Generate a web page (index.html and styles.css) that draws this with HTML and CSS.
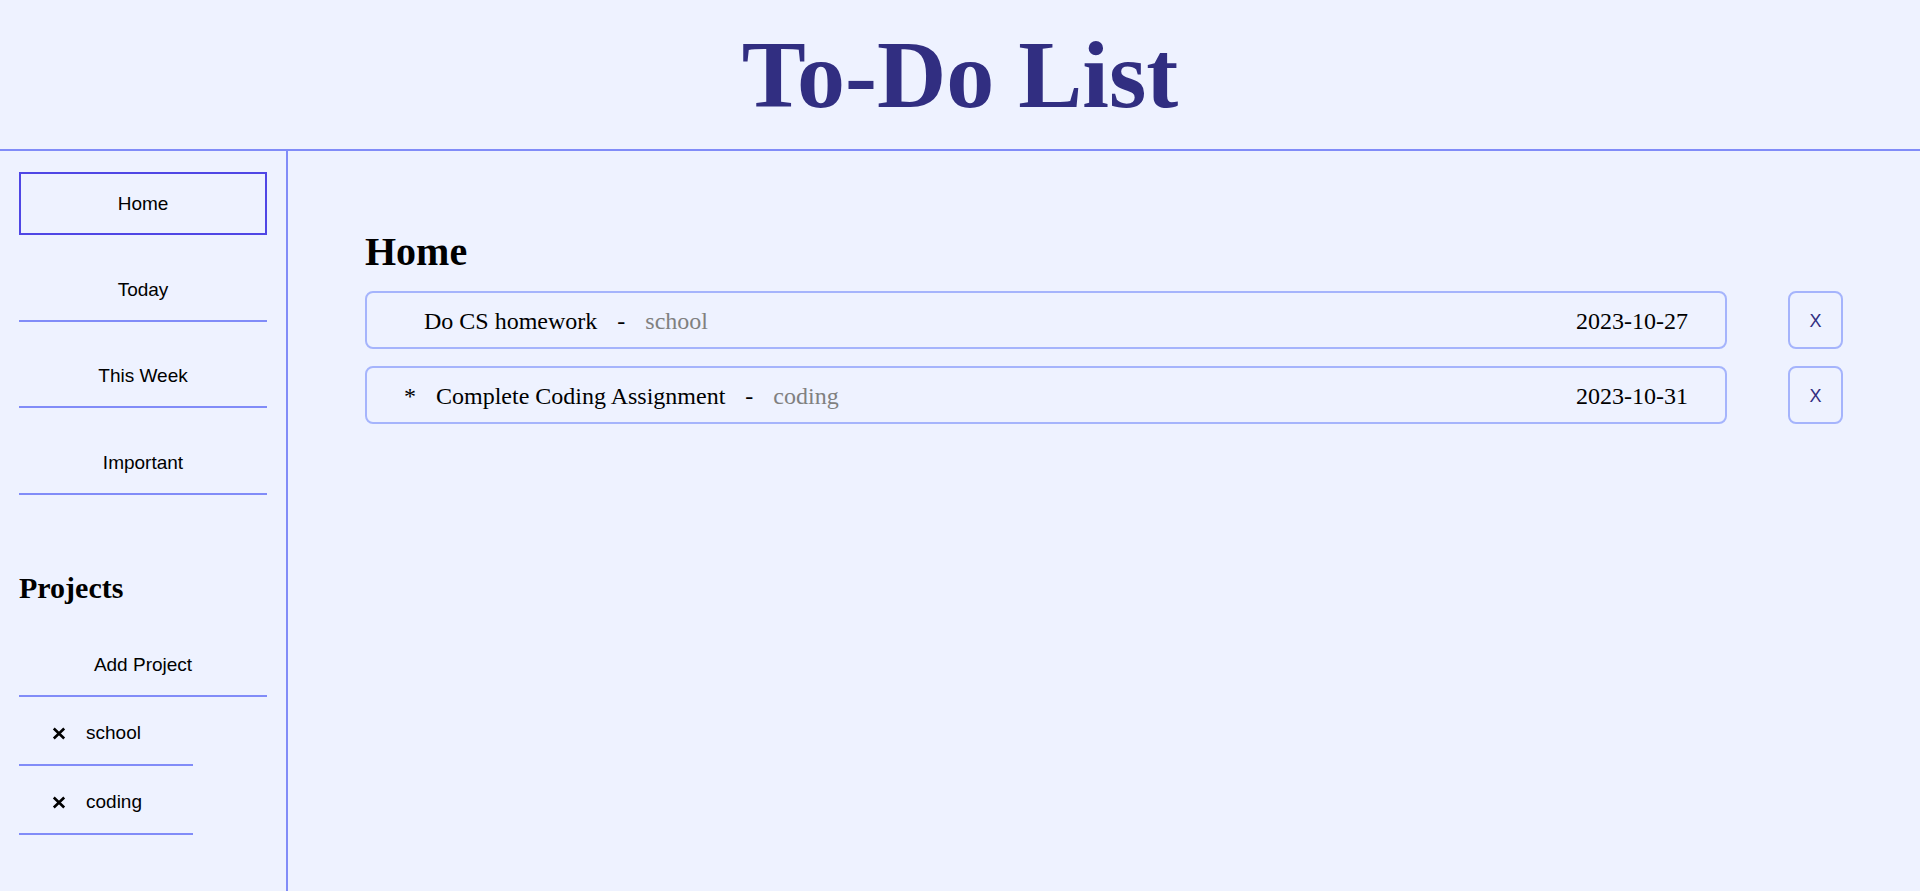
FILE: index.html
```html
<!DOCTYPE html>
<html lang="en">
<head>
<meta charset="utf-8">
<title>To-Do List</title>
<link rel="stylesheet" href="styles.css">
</head>
<body>
<header class="header">
  <h1 class="title">To-Do List</h1>
</header>
<div class="layout">
  <nav class="sidebar">
    <div class="menu">
      <button class="nav-item active">Home</button>
      <button class="nav-item">Today</button>
      <button class="nav-item">This Week</button>
      <button class="nav-item">Important</button>
    </div>
    <h2 class="projects-title">Projects</h2>
    <button class="nav-item">Add Project</button>
    <ul class="project-list">
      <li class="project-item">
        <svg class="remove-icon" viewBox="0 0 14 13" width="14" height="13" aria-hidden="true"><path d="M1.8 1.5 L12.2 11.5 M12.2 1.5 L1.8 11.5" stroke="#000" stroke-width="2.6" fill="none"/></svg>
        <span>school</span>
      </li>
      <li class="project-item">
        <svg class="remove-icon" viewBox="0 0 14 13" width="14" height="13" aria-hidden="true"><path d="M1.8 1.5 L12.2 11.5 M12.2 1.5 L1.8 11.5" stroke="#000" stroke-width="2.6" fill="none"/></svg>
        <span>coding</span>
      </li>
    </ul>
  </nav>
  <main class="main">
    <h1 class="page-title">Home</h1>
    <div class="task-list">
      <div class="task-row">
        <div class="task">
          <div class="task-left">
            <span class="star"></span>
            <span class="task-name">Do CS homework</span>
            <span class="dash">-</span>
            <span class="task-project">school</span>
          </div>
          <span class="task-date">2023-10-27</span>
        </div>
        <button class="delete">X</button>
      </div>
      <div class="task-row">
        <div class="task">
          <div class="task-left">
            <span class="star">*</span>
            <span class="task-name">Complete Coding Assignment</span>
            <span class="dash">-</span>
            <span class="task-project">coding</span>
          </div>
          <span class="task-date">2023-10-31</span>
        </div>
        <button class="delete">X</button>
      </div>
    </div>
  </main>
</div>
</body>
</html>
```
FILE: styles.css
```css
* {
  box-sizing: border-box;
}

html, body {
  margin: 0;
  padding: 0;
  height: 100%;
}

body {
  background: #eef2ff;
  font-family: "Liberation Serif", "Times New Roman", serif;
  color: #000;
  display: flex;
  flex-direction: column;
}

.header {
  height: 151px;
  border-bottom: 2px solid #818cf8;
  display: flex;
  align-items: center;
  justify-content: center;
  flex-shrink: 0;
}

.title {
  margin: 0;
  font-size: 96px;
  font-weight: bold;
  line-height: normal;
  color: #312e81;
}

.layout {
  flex: 1;
  display: flex;
}

.sidebar {
  width: 288px;
  flex-shrink: 0;
  padding: 21px 19px 20px;
  border-right: 2px solid #818cf8;
}

.menu {
  display: flex;
  flex-direction: column;
  gap: 23.5px;
}

.nav-item {
  display: block;
  width: 248px;
  height: 63px;
  padding: 1px 0 0;
  background: transparent;
  border: none;
  border-bottom: 2px solid #818cf8;
  font-family: "Liberation Sans", Arial, sans-serif;
  font-size: 19px;
  color: #000;
  text-align: center;
}

.nav-item.active {
  border: 2px solid #4f46e5;
}

.projects-title {
  margin: 76.5px 0 28.5px;
  font-size: 30px;
  font-weight: bold;
  line-height: normal;
}

.project-list {
  list-style: none;
  margin: 0;
  padding: 0;
}

.project-item {
  width: 174px;
  height: 69px;
  padding: 6px 0 0 33px;
  display: flex;
  align-items: center;
  gap: 20px;
  border-bottom: 2px solid #818cf8;
  font-family: "Liberation Sans", Arial, sans-serif;
  font-size: 19px;
}

.remove-icon {
  display: block;
  flex-shrink: 0;
}

.main {
  flex: 1;
  padding: 76.5px 77px;
}

.page-title {
  margin: 0 0 16px;
  font-size: 40px;
  font-weight: bold;
  line-height: normal;
}

.task-list {
  display: flex;
  flex-direction: column;
  gap: 17px;
}

.task-row {
  display: flex;
  gap: 61px;
  height: 58px;
}

.task {
  flex: 1;
  display: flex;
  align-items: center;
  justify-content: space-between;
  padding: 3px 37px 0;
  border: 2px solid #a5b4fc;
  border-radius: 8px;
  font-size: 24px;
}

.task-left {
  display: flex;
  align-items: center;
  gap: 20px;
}

.task-project {
  color: #808080;
}

.delete {
  width: 55px;
  height: 58px;
  padding: 3px 0 0;
  background: transparent;
  border: 2px solid #a5b4fc;
  border-radius: 8px;
  font-family: "Liberation Sans", Arial, sans-serif;
  font-size: 18px;
  color: #312e81;
}
```
